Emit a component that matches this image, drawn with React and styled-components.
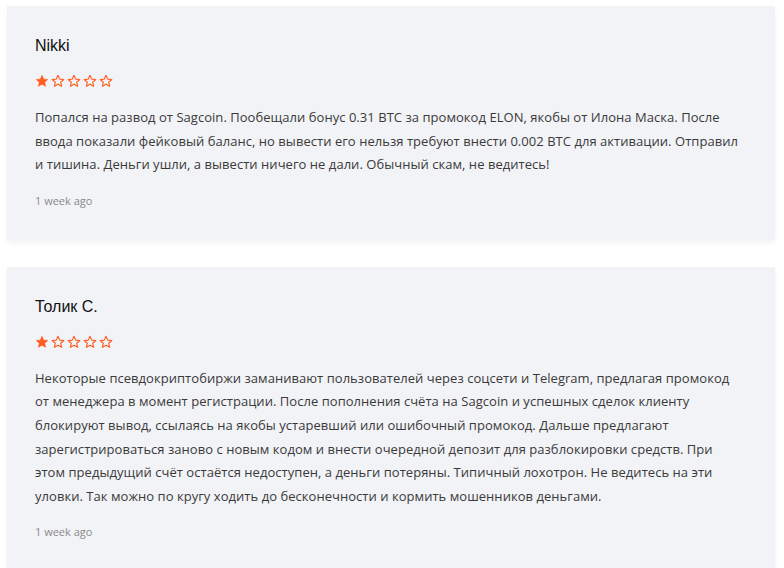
import React from "react";
import styled, { createGlobalStyle } from "styled-components";

const GlobalStyle = createGlobalStyle`
    body {
        margin: 0;
        background: #ffffff;
        font-family: "Open Sans", "Liberation Sans", sans-serif;
    }
`;

const reviews = [
    {
        name: "Nikki",
        rating: 1,
        text: "Попался на развод от Sagcoin. Пообещали бонус 0.31 BTC за промокод ELON, якобы от Илона Маска. После ввода показали фейковый баланс, но вывести его нельзя требуют внести 0.002 BTC для активации. Отправил и тишина. Деньги ушли, а вывести ничего не дали. Обычный скам, не ведитесь!",
        date: "1 week ago",
    },
    {
        name: "Толик С.",
        rating: 1,
        text: "Некоторые псевдокриптобиржи заманивают пользователей через соцсети и Telegram, предлагая промокод от менеджера в момент регистрации. После пополнения счёта на Sagcoin и успешных сделок клиенту блокируют вывод, ссылаясь на якобы устаревший или ошибочный промокод. Дальше предлагают зарегистрироваться заново с новым кодом и внести очередной депозит для разблокировки средств. При этом предыдущий счёт остаётся недоступен, а деньги потеряны. Типичный лохотрон. Не ведитесь на эти уловки. Так можно по кругу ходить до бесконечности и кормить мошенников деньгами.",
        date: "1 week ago",
    },
];

const List = styled.div`
    display: flex;
    flex-direction: column;
    gap: 28px;
    padding: 6px 9px 0 7px;
`;

const Card = styled.article`
    background: #f2f3f7;
    padding: 30px 32px 30px 28px;
    box-shadow: 0 4px 6px rgba(0, 0, 0, 0.05);
`;

const Name = styled.h3`
    margin: 0;
    font-family: "Liberation Sans", Arial, sans-serif;
    font-weight: 400;
    font-size: 16px;
    line-height: 20px;
    color: #111;
`;

const Stars = styled.div`
    display: flex;
    gap: 2px;
    margin-top: 18px;
    height: 14px;
`;

const Text = styled.p`
    margin: 18px 0 0;
    font-size: 13px;
    letter-spacing: 0.04px;
    line-height: 23.6px;
    color: #3a3a3a;
`;

const Date = styled.div`
    margin-top: 16px;
    font-size: 11px;
    line-height: 16px;
    color: #8a8a8a;
`;

function Star({ filled }) {
    return (
        <svg width="14" height="14" viewBox="0 0 24 24">
            <path
                d="M12 2.2l2.9 6.6 7.1.6-5.4 4.7 1.6 7-6.2-3.7-6.2 3.7 1.6-7L2 9.4l7.1-.6z"
                fill={filled ? "#ff5a1f" : "none"}
                stroke="#ff5a1f"
                strokeWidth={filled ? 1 : 1.9}
                strokeLinejoin="round"
            />
        </svg>
    );
}

function Review({ review }) {
    return (
        <Card>
            <Name>{review.name}</Name>
            <Stars>
                {[1, 2, 3, 4, 5].map((n) => (
                    <Star key={n} filled={n <= review.rating} />
                ))}
            </Stars>
            <Text>{review.text}</Text>
            <Date>{review.date}</Date>
        </Card>
    );
}

export default function App() {
    return (
        <>
            <GlobalStyle />
            <List>
                {reviews.map((r) => (
                    <Review key={r.name} review={r} />
                ))}
            </List>
        </>
    );
}
